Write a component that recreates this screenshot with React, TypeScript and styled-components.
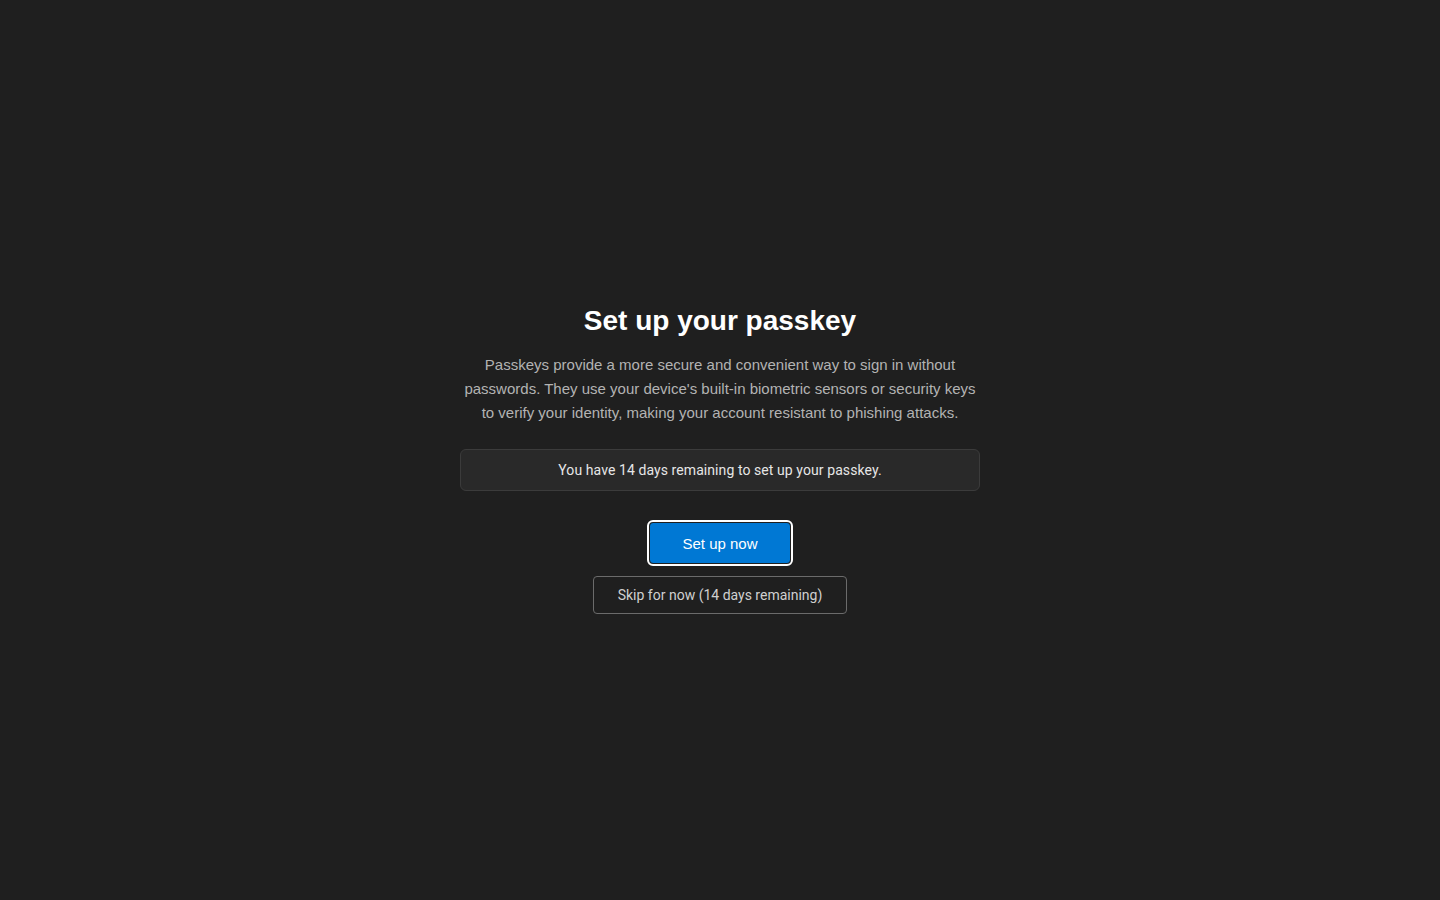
import React from 'react'
import styled, { createGlobalStyle } from 'styled-components'

const GlobalStyle = createGlobalStyle`
  html, body {
    margin: 0;
    padding: 0;
    background: #1f1f1f;
    font-family: "Liberation Sans", Arial, sans-serif;
  }
`

const Page = styled.main`
  box-sizing: border-box;
  min-height: 100vh;
  padding-top: 17px;
  display: flex;
  align-items: center;
  justify-content: center;
`

const Panel = styled.section`
  width: 520px;
  display: flex;
  flex-direction: column;
  align-items: center;
  text-align: center;
`

const Title = styled.h1`
  margin: 0 0 14px;
  font-size: 28px;
  line-height: 36px;
  font-weight: 700;
  color: #ffffff;
`

const Lead = styled.p`
  margin: 0 0 24px;
  font-size: 15px;
  line-height: 24px;
  color: #b3b3b3;
`

const Notice = styled.div`
  box-sizing: border-box;
  width: 100%;
  padding: 11px 16px;
  border: 1px solid #3b3b3b;
  border-radius: 6px;
  background: #292929;
  font-family: Roboto, "Liberation Sans", sans-serif;
  font-size: 14px;
  line-height: 18px;
  letter-spacing: 0.08px;
  color: #e6e6e6;
`

const Actions = styled.div`
  margin-top: 31px;
  display: flex;
  flex-direction: column;
  align-items: center;
  gap: 12px;
`

const Button = styled.button<{ $primary?: boolean }>`
  box-sizing: border-box;
  border-radius: 4px;
  cursor: pointer;
  font-family: ${({ $primary }) => ($primary ? '"Liberation Sans", sans-serif' : 'Roboto, "Liberation Sans", sans-serif')};
  font-size: ${({ $primary }) => ($primary ? '15px' : '14px')};
  color: ${({ $primary }) => ($primary ? '#ffffff' : '#d0d0d0')};
  background: ${({ $primary }) => ($primary ? '#0078d4' : 'transparent')};
  border: 1px solid ${({ $primary }) => ($primary ? '#1f1f1f' : '#6b6b6b')};
  height: ${({ $primary }) => ($primary ? '42px' : '38px')};
  padding: ${({ $primary }) => ($primary ? '0 32px' : '0 24px')};
  min-width: ${({ $primary }) => ($primary ? '140px' : '0')};
  outline: ${({ $primary }) => ($primary ? '2px solid #ffffff' : 'none')};
  outline-offset: 0;
`

export default function App() {
  return (
    <>
      <GlobalStyle />
      <Page>
        <Panel>
          <Title>Set up your passkey</Title>
          <Lead>
            Passkeys provide a more secure and convenient way to sign in without passwords. They use
            your device's built-in biometric sensors or security keys to verify your identity, making
            your account resistant to phishing attacks.
          </Lead>
          <Notice>You have 14 days remaining to set up your passkey.</Notice>
          <Actions>
            <Button $primary>Set up now</Button>
            <Button>Skip for now (14 days remaining)</Button>
          </Actions>
        </Panel>
      </Page>
    </>
  )
}
